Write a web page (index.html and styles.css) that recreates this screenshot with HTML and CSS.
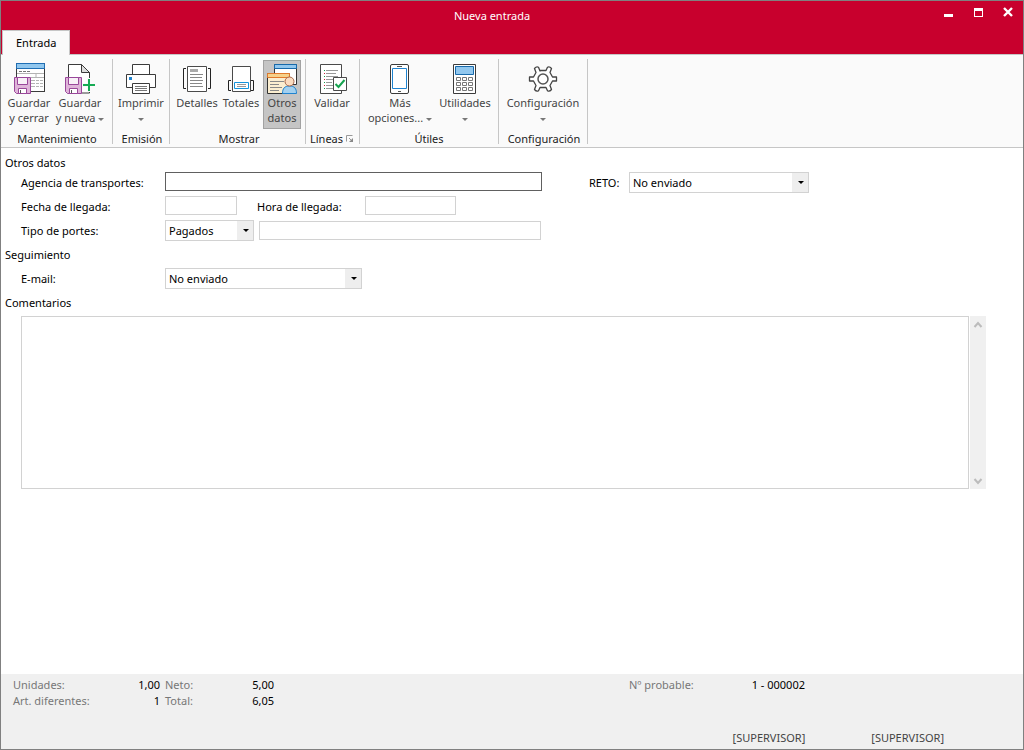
FILE: index.html
```html
<!DOCTYPE html>
<html lang="es">
<head>
<meta charset="utf-8">
<title>Nueva entrada</title>
<link rel="stylesheet" href="styles.css">
</head>
<body>
<div class="window">
  <header class="header">
    <div class="titlebar">
      <h1 class="title">Nueva entrada</h1>
      <div class="controls">
        <button type="button" class="control" aria-label="Minimizar"><svg width="30" height="30" shape-rendering="crispEdges"><path d="M11 13h9v3h-9z" fill="#fff"/></svg></button>
        <button type="button" class="control" aria-label="Maximizar"><svg width="30" height="30" shape-rendering="crispEdges"><path fill-rule="evenodd" d="M11 7h9v9h-9zM12 10v5h7v-5z" fill="#fff"/></svg></button>
        <button type="button" class="control" aria-label="Cerrar"><svg width="30" height="30"><path d="M11 7l8 8M19 7l-8 8" stroke="#fff" stroke-width="2.4"/></svg></button>
      </div>
    </div>
    <nav class="tabs"><button type="button" class="tab">Entrada</button></nav>
  </header>

  <div class="ribbon">
    <section class="group g-save">
      <div class="tools">
        <button type="button" class="tool w50">
          <svg width="32" height="34"><rect x="3.5" y="1.5" width="28" height="28" fill="#fff" stroke="#3b3b3b"/><path d="M3.5 1.5h28v5h-28z" fill="#91c7ee" stroke="#1f6fb5"/><path d="M6 9.5h3m1 0h3m1 0h3" stroke="#777"/><path d="M4 11.500h27M18 15.500h13M18 18.500h4m1 0h3m1 0h3M18 21.500h4m1 0h3m1 0h3M18 24.500h4m1 0h3m1 0h3M23 11v4" stroke="#b4b4b4"/><path d="M1.500 15.500h16v16h-14l-2-2z" fill="#dfb4d9" stroke="#99479a"/><path d="M4.500 15.500h10v7h-10z" fill="#f8f0f7" stroke="#99479a"/><path d="M5.500 31.500v-5h8v5z" fill="#fff" stroke="#99479a"/><path d="M7.500 28v3" stroke="#555"/></svg>
          <span>Guardar</span><span>y cerrar</span>
        </button>
        <button type="button" class="tool w52">
          <svg width="32" height="34"><path d="M4.500 15v-12.500h13l8 8v20.500h-8" fill="#fff" stroke="#3b3b3b"/><path d="M17.500 2.500v8h8z" fill="#ddd" stroke="#3b3b3b"/><path d="M1.500 15.500h16v16h-14l-2-2z" fill="#dfb4d9" stroke="#99479a"/><path d="M4.500 15.500h10v7h-10z" fill="#f8f0f7" stroke="#99479a"/><path d="M5.500 31.500v-5h8v5z" fill="#fff" stroke="#99479a"/><path d="M7.500 28v3" stroke="#555"/><path d="M25 16v14M18 23h13" stroke="#fafafa" stroke-width="4"/><path d="M25 17v12M19 23h12" stroke="#16ab54" stroke-width="2"/></svg>
          <span>Guardar</span><span>y nueva <i class="caret"></i></span>
        </button>
      </div>
      <h2>Mantenimiento</h2>
    </section>
    <section class="group g-print">
      <div class="tools">
        <button type="button" class="tool w50">
          <svg width="32" height="34"><path d="M7.500 12.500v-10h17v10" fill="#fff" stroke="#3b3b3b"/><path d="M1.500 12.500h29v13h-29z" fill="#fff" stroke="#3b3b3b"/><path d="M4 15h3v3h-3z" fill="#1f83cf"/><path d="M7.500 21.500h17v10h-17z" fill="#fff" stroke="#3b3b3b"/><path d="M10 24.500h12M10 26.500h12M10 28.500h12" stroke="#777"/></svg>
          <span>Imprimir</span><span><i class="caret"></i></span>
        </button>
      </div>
      <h2>Emisión</h2>
    </section>
    <section class="group g-show">
      <div class="tools">
        <button type="button" class="tool w44">
          <svg width="32" height="34"><path d="M5 6.500h-2.500v20h2.500M27 6.500h2.500v20h-2.500" fill="none" stroke="#222"/><path d="M6.500 4.500h19v25h-19z" fill="#fff" stroke="#4a4a4a"/><path d="M9 7h8v3h-8z" fill="#aaa"/><path d="M9 12.500h13M9 15.500h12M9 18.500h13M9 21.500h12M9 24.500h13" stroke="#888"/></svg>
          <span>Detalles</span>
        </button>
        <button type="button" class="tool w44">
          <svg width="32" height="34"><path d="M6 18.500h-2.500v10h2.500M26 18.500h2.500v10h-2.500" fill="none" stroke="#222"/><path d="M7.500 4.500h18v25h-18z" fill="#fff" stroke="#4a4a4a"/><path d="M9.500 20.500h14v6h-14z" fill="#fff" stroke="#1594dc"/><path d="M12 22.500h9M12 24.500h9" stroke="#999"/></svg>
          <span>Totales</span>
        </button>
        <button type="button" class="tool w38 on" aria-pressed="true">
          <svg width="32" height="34"><path d="M8.500 2.500h22v20h-22z" fill="#fff" stroke="#333"/><path d="M8.500 2.500h22v4h-22z" fill="#91c7ee" stroke="#1769aa"/><path d="M1.500 11.500h22v20h-22z" fill="#fbeed0" stroke="#333"/><path d="M1.500 11.500h22v4h-22z" fill="#f6d18a" stroke="#e07a2c"/><path d="M4 19.500h14M4 22.500h9M4 25.500h12M4 28.500h9" stroke="#888"/><path d="M16.500 31.500c0-5 2-7.500 7-7.500s7 2.500 7 7.500z" fill="#a3d0ef" stroke="#1f83cf"/><circle cx="23.500" cy="19.500" r="4.500" fill="#fbdcc0" stroke="#a5664a"/></svg>
          <span>Otros</span><span>datos</span>
        </button>
      </div>
      <h2>Mostrar</h2>
    </section>
    <section class="group g-lines">
      <div class="tools">
        <button type="button" class="tool w44">
          <svg width="32" height="34"><path d="M4.500 2.500h21v29h-21z" fill="#fff" stroke="#4a4a4a"/><path d="M10 8.500h12M10 11.500h10M10 14.500h12M10 17.500h7M10 20.500h6M10 23.500h7M10 26.500h12" stroke="#999"/><path d="M8 8.500h1m-1 6h1m-1 6h1m-1 6h1" stroke="#14a04c"/><path d="M8 11.500h1m-1 6h1m-1 6h1" stroke="#cf2136"/><path d="M17.500 15.500h13v13h-13z" fill="#fff" stroke="#4a4a4a"/><path d="M19.500 22l3 3 6-7" fill="none" stroke="#16a34f" stroke-width="2"/></svg>
          <span>Validar</span>
        </button>
      </div>
      <div class="launch-row"><h2>Líneas</h2><button type="button" class="launcher" aria-label="Opciones de líneas"><svg width="8" height="8"><path d="M.5 6.500v-6h6M3 3l3 3" fill="none" stroke="#999"/><path d="M7 3v4h-4z" fill="#888"/></svg></button></div>
    </section>
    <section class="group g-utils">
      <div class="tools">
        <button type="button" class="tool w74">
          <svg width="32" height="34"><rect x="6.500" y="2.500" width="18" height="29" rx="1.500" fill="#fff" stroke="#3b3b3b"/><path d="M13 4.500h5M14 29.500h3" stroke="#555"/><path d="M8.500 6.500h14v20h-14z" fill="#fff" stroke="#1f83cf"/></svg>
          <span>Más</span><span>opciones... <i class="caret"></i></span>
        </button>
        <button type="button" class="tool w56">
          <svg width="32" height="34"><path d="M4.500 2.500h22v29h-22z" fill="#fff" stroke="#3b3b3b"/><path d="M6.500 4.500h18v8h-18z" fill="#91c7ee" stroke="#1769aa"/><path d="M7.500 15.500h4v3h-4zM13.500 15.500h4v3h-4zM19.500 15.500h4v3h-4zM7.500 20.500h4v3h-4zM13.500 20.500h4v3h-4zM19.500 20.500h4v3h-4zM7.500 25.500h4v3h-4zM13.500 25.500h4v3h-4zM19.500 25.500h4v3h-4z" fill="none" stroke="#777"/></svg>
          <span>Utilidades</span><span><i class="caret"></i></span>
        </button>
      </div>
      <h2>Útiles</h2>
    </section>
    <section class="group g-config">
      <div class="tools">
        <button type="button" class="tool w80">
          <svg width="32" height="34"><path d="M13 9L11.500 5.200Q9.500 4 7.500 6.500L9 10.500L6.500 15H2.500V19H6.500L9 23.500L7.500 27.500Q9.500 30 11.500 28.800L13 25.500H19L20.500 28.800Q22.500 30 24.500 27.500L23 23.500L25.500 19H29.500V15H25.500L23 10.500L24.500 6.500Q22.500 4 20.500 5.200L19 8.500H13Z" fill="#fff" stroke="#444" stroke-width="1.300" stroke-linejoin="round"/><circle cx="16" cy="17" r="5" fill="#fff" stroke="#555" stroke-width="1.500"/></svg>
          <span>Configuración</span><span><i class="caret"></i></span>
        </button>
      </div>
      <h2>Configuración</h2>
    </section>
  </div>

  <main class="form">
    <h2 class="heading">Otros datos</h2>
    <div class="row">
      <label class="main-label" for="agencia">Agencia de transportes:</label>
      <input class="agency focus" id="agencia" type="text">
      <label class="reto-label" for="reto">RETO:</label>
      <span class="select reto"><select id="reto"><option>No enviado</option></select></span>
    </div>
    <div class="row">
      <label class="main-label" for="fecha">Fecha de llegada:</label>
      <input class="date" id="fecha" type="text">
      <label class="hour-label" for="hora">Hora de llegada:</label>
      <input class="hour" id="hora" type="text">
    </div>
    <div class="row">
      <label class="main-label" for="portes">Tipo de portes:</label>
      <span class="select portes"><select id="portes"><option>Pagados</option></select></span>
      <input class="portes-text" type="text" aria-label="Detalle de portes">
    </div>
    <h2 class="heading tall">Seguimiento</h2>
    <div class="row">
      <label class="main-label" for="email">E-mail:</label>
      <span class="select email"><select id="email"><option>No enviado</option></select></span>
    </div>
    <h2 class="heading tall"><label for="comentarios">Comentarios</label></h2>
    <div class="comments">
      <textarea id="comentarios"></textarea>
      <div class="scroll">
        <button type="button" aria-label="Subir"><svg width="16" height="16"><path d="M4.500 11l3.500-4 3.500 4" fill="none" stroke="#bcbcbc" stroke-width="2"/></svg></button>
        <button type="button" aria-label="Bajar"><svg width="16" height="16"><path d="M4.500 6l3.500 4 3.500-4" fill="none" stroke="#bcbcbc" stroke-width="2"/></svg></button>
      </div>
    </div>
  </main>

  <footer class="footer">
    <div class="totals">
      <span>Unidades:</span><b>1,00</b><span class="next">Neto:</span><b>5,00</b><span class="number">Nº probable:</span><b>1 - 000002</b>
      <span>Art. diferentes:</span><b>1</b><span class="next">Total:</span><b>6,05</b>
    </div>
    <div class="users"><span>[SUPERVISOR]</span><span>[SUPERVISOR]</span></div>
  </footer>
</div>
</body>
</html>
```
FILE: styles.css
```css
* { box-sizing: border-box; }
body { margin: 0; font: 11px/15px "Noto Sans", "Open Sans", sans-serif; color: #000; }
h1, h2 { margin: 0; font-size: 11px; font-weight: 400; }
button { margin: 0; padding: 0; border: 0; background: none; font: inherit; color: inherit; }
svg { display: block; }

.window { display: flex; flex-direction: column; min-height: 100vh; border: 1px solid #808080; background: #fff; }

.header { background: #c8002d; }
.titlebar { display: flex; height: 29px; padding-left: 50px; }
.title { flex: 1; color: #fff; line-height: 30px; text-align: center; }
.controls { display: flex; height: 29px; }
.control { display: flex; align-items: flex-start; width: 30px; }
.tabs { display: flex; padding-left: 1px; border-bottom: 1px solid #c6c6c6; }
.tab { height: 25px; margin-bottom: -1px; padding: 0 13px 2px; border: 1px solid #c6c6c6; border-bottom: 0; background: #fafafa; }

.ribbon { display: flex; padding: 4px 0 3px 1px; background: #fafafa; border-bottom: 1px solid #c6c6c6; }
.group { display: flex; flex-direction: column; justify-content: space-between; height: 85px; padding-top: 1px; border-right: 1px solid #c6c6c6; }
.group h2 { line-height: 10px; padding-left: 2px; text-align: center; color: #222; }
.tools { display: flex; }
.g-save { padding-left: 2px; padding-right: 6px; }
.g-save h2 { padding-left: 4px; }
.g-print { padding-left: 3px; padding-right: 3px; }
.g-show { padding-left: 5px; padding-right: 4px; }
.g-lines { padding-left: 4px; padding-right: 5px; }
.g-utils { padding-left: 3px; padding-right: 5px; }
.g-config { padding-left: 4px; padding-right: 4px; }
.tool { display: flex; flex-direction: column; align-items: center; height: 69px; padding-top: 2px; color: #444; white-space: nowrap; }
.tool svg { margin-bottom: -1px; }
.tool span { min-height: 15px; }
.tool.on { background: #c5c5c5; outline: 1px solid #a2a2a2; outline-offset: -1px; }
.w38 { width: 38px; }
.w44 { width: 44px; }
.w50 { width: 50px; }
.w52 { width: 52px; }
.w56 { width: 56px; }
.w74 { width: 74px; }
.w80 { width: 80px; }
.caret { display: inline-block; vertical-align: middle; border: 3px solid transparent; border-top-color: #777; border-bottom: 0; }
.launch-row { display: flex; align-items: center; justify-content: space-between; }
.launch-row h2 { padding-left: 0; }

.form { flex: 1; padding: 5px 37px 0 20px; }
.heading { height: 18px; margin-left: -16px; line-height: 20px; }
.heading.tall { height: 24px; line-height: 24px; }
.row { display: flex; align-items: flex-start; height: 24px; padding-top: 1px; }
.row label { line-height: 22px; }
.main-label { width: 144px; }
input, select, textarea { margin: 0; padding: 0 3px; border: 1px solid #d2d2d2; border-radius: 0; background: #fff; color: #000; font: inherit; outline: none; }
input { height: 19px; }
.focus { border-color: #606060; }
.agency { width: 377px; }
.date { width: 72px; }
.hour { width: 91px; }
.hour-label { width: 108px; margin-left: 20px; }
.reto-label { width: 40px; margin-left: 47px; }
.portes-text { width: 282px; margin: 1px 0 0 5px; }
.select { position: relative; display: block; height: 21px; }
.select select { width: 100%; height: 21px; appearance: none; }
.select::before { content: ""; position: absolute; top: 1px; right: 1px; width: 16px; height: 19px; background: #eee; pointer-events: none; }
.select::after { content: ""; position: absolute; top: 9px; right: 5px; border: 3px solid transparent; border-top-color: #000; border-bottom: 0; pointer-events: none; }
.reto { width: 180px; }
.portes { width: 89px; }
.email { width: 197px; }
.comments { display: flex; gap: 1px; height: 173px; margin-top: 1px; }
.comments textarea { flex: 1; resize: none; }
.scroll { display: flex; flex-direction: column; justify-content: space-between; width: 16px; background: #f0f0f0; }

.footer { display: flex; flex-direction: column; justify-content: space-between; min-height: 75px; padding: 3px 12px 4px; background: #f0f0f0; }
.totals { display: grid; grid-template-columns: 90px 57px 50px 64px 451px 80px; line-height: 16px; color: #777; }
.totals b { font-weight: 400; color: #000; text-align: right; }
.totals .next { padding-left: 5px; }
.totals .number { padding-left: 355px; }
.users { display: flex; justify-content: flex-end; gap: 66px; padding-right: 67px; color: #444; }
```
